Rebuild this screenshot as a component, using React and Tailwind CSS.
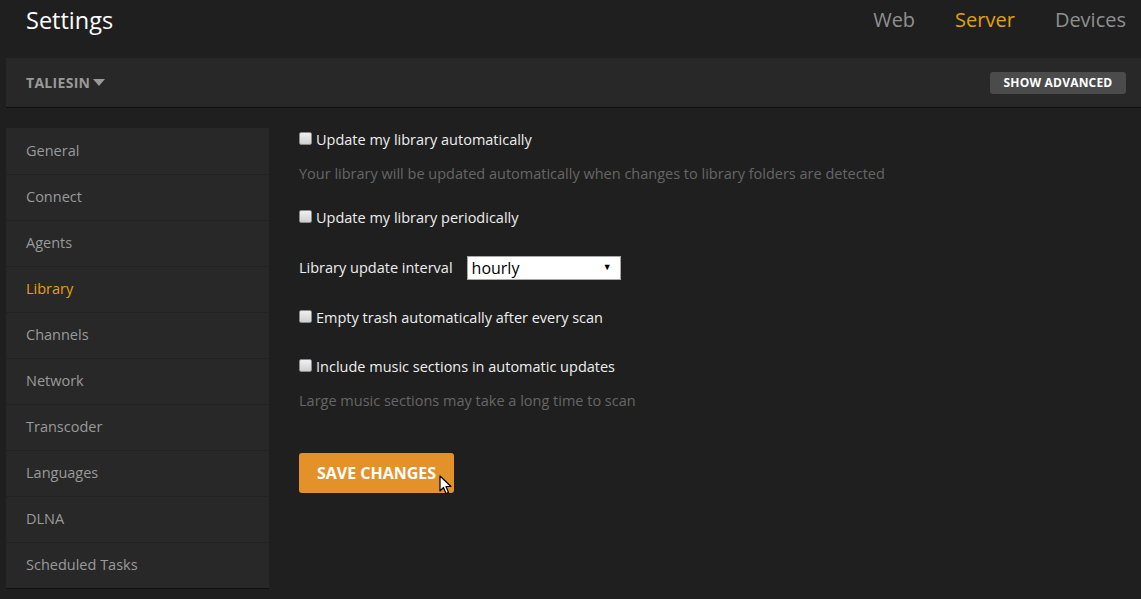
import React from "react";

const navItems = [
  "General",
  "Connect",
  "Agents",
  "Library",
  "Channels",
  "Network",
  "Transcoder",
  "Languages",
  "DLNA",
  "Scheduled Tasks",
];

const Check = ({ label }) => (
  <label className="flex h-[24px] items-center text-[14.5px] text-[#eeeeee]">
    <span className="mr-[4px] mt-[-3px] inline-block h-[13px] w-[13px] rounded-[2px] border border-[#8a8a8a] bg-gradient-to-b from-[#f0f0f0] to-[#cfcfcf]" />
    {label}
  </label>
);

export default function App() {
  return (
    <div
      className="relative min-h-[599px] w-full bg-[#1f1f1f]"
      style={{ fontFamily: '"Open Sans", "Noto Sans", sans-serif' }}
    >
      {/* Top title + tabs */}
      <div className="flex h-[58px] items-start justify-between pl-[26px] pr-[15px] pt-[5px]">
        <h1 className="text-[23.5px] leading-[30px] text-white">Settings</h1>
        <div className="flex gap-[40px] pt-[1px] text-[20px] leading-[28px]">
          <span className="text-[#8f8f8f]">Web</span>
          <span className="text-[#e5a00d]">Server</span>
          <span className="text-[#8f8f8f]">Devices</span>
        </div>
      </div>

      {/* Server bar */}
      <div className="ml-[6px] flex h-[50px] items-center justify-between border-b border-[#0f0f0f] bg-[#282828] pl-[20px] pr-[15px]">
        <div className="flex items-center text-[14px] font-bold tracking-[0.3px] text-[#999999]">
          TALIESIN
          <svg className="ml-[3px]" width="12" height="7" viewBox="0 0 12 7">
            <path d="M0 0h12L6 7z" fill="#999999" />
          </svg>
        </div>
        <button className="h-[22px] w-[136px] rounded-[3px] bg-[#4b4b4b] text-[12px] font-bold tracking-[0.2px] text-white">
          SHOW ADVANCED
        </button>
      </div>

      <div className="mt-[20px] flex">
        {/* Sidebar */}
        <nav className="ml-[6px] w-[263px] border-b border-[#111111] bg-[#282828]">
          {navItems.map((item, i) => (
            <div
              key={item}
              className={
                "flex h-[46px] items-center pb-[1px] pl-[20px] text-[14.5px] " +
                (i > 0 ? "border-t border-[#222222] " : "") +
                (item === "Library" ? "text-[#e5a00d]" : "text-[#9a9a9a]")
              }
            >
              {item}
            </div>
          ))}
        </nav>

        {/* Content */}
        <div className="ml-[30px] flex flex-col items-start">
          <Check label="Update my library automatically" />
          <p className="mt-[12px] text-[14.5px] leading-[20px] text-[#666666]">
            Your library will be updated automatically when changes to library folders are detected
          </p>
          <div className="mt-[22px]">
            <Check label="Update my library periodically" />
          </div>
          <div className="mt-[26px] flex h-[24px] items-center text-[14.5px] text-[#eeeeee]">
            <span>Library update interval</span>
            <div className="relative ml-[14px] h-[24px] w-[154px] border border-[#a9a9a9] bg-white">
              <span className="absolute left-[4px] top-[1px] text-[16px] leading-[20px] text-black">
                hourly
              </span>
              <span className="absolute right-[8px] top-[3px] text-[9px] text-black">▼</span>
            </div>
          </div>
          <div className="mt-[26px]">
            <Check label="Empty trash automatically after every scan" />
          </div>
          <div className="mt-[25px]">
            <Check label="Include music sections in automatic updates" />
          </div>
          <p className="mt-[12px] text-[14.5px] leading-[20px] text-[#666666]">
            Large music sections may take a long time to scan
          </p>
          <button className="relative mt-[42px] h-[40px] w-[155px] rounded-[3px] bg-[#e5912a] text-[16px] font-bold text-white">
            SAVE CHANGES
            <svg
              className="absolute left-[140px] top-[22px]"
              width="14"
              height="20"
              viewBox="0 0 14 20"
            >
              <path
                d="M1 1v15l3.5-3.5 2.5 6 2.5-1-2.5-6h5z"
                fill="white"
                stroke="black"
                strokeWidth="1.2"
                strokeLinejoin="round"
              />
            </svg>
          </button>
        </div>
      </div>
    </div>
  );
}
